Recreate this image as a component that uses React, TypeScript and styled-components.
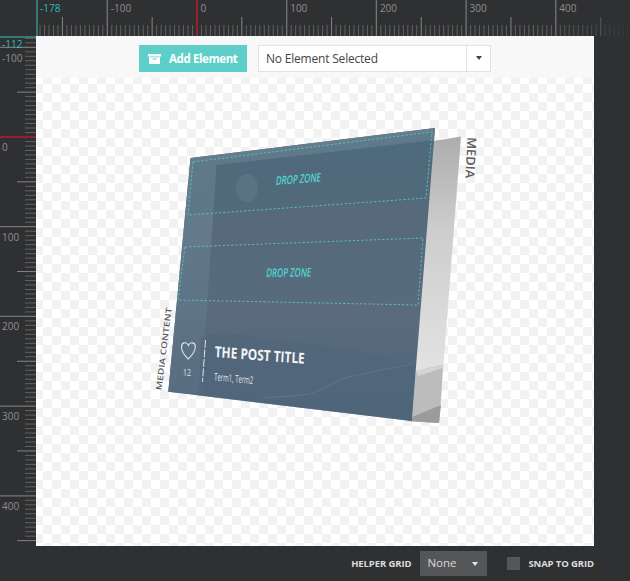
/**
 * App.tsx
 * Card layout editor: rulers, canvas with 3D card preview, footer options
 */
import React from 'react'
import styled, { createGlobalStyle } from 'styled-components'

const GlobalStyle = createGlobalStyle`
  html, body {
    margin: 0;
    padding: 0;
    background: #2f3032;
    font-family: 'Open Sans', 'Liberation Sans', sans-serif;
  }
`

const Editor = styled.div`
  width: 630px;
  height: 581px;
  overflow: hidden;
  display: grid;
  grid-template-columns: 36px 558px 36px;
  grid-template-rows: 36px 510px 35px;
  background: #2f3032;
`

const TopRulerSlot = styled.div`
  grid-column: 1 / 4;
  grid-row: 1;
`

const LeftRulerSlot = styled.div`
  grid-column: 1;
  grid-row: 2 / 4;
`

const RulerSvg = styled.svg`
  display: block;
`

const RulerLabel = styled.text<{ $active?: boolean }>`
  font-family: 'Open Sans', 'Liberation Sans', sans-serif;
  font-size: 10px;
  fill: ${(props) => (props.$active ? '#2fb9b5' : '#8f8f8f')};
`

const Canvas = styled.div`
  grid-column: 2;
  grid-row: 2;
  display: flex;
  flex-direction: column;
  background-color: #fff;
  background-image: repeating-conic-gradient(#f2f2f2 0 25%, #fff 0 50%);
  background-size: 18px 18px;
  background-position: 7px 12px;
`

const Toolbar = styled.div`
  height: 42px;
  flex: none;
  box-sizing: border-box;
  padding: 9px 0 0 103px;
  display: flex;
  align-items: flex-start;
  gap: 11px;
  background: #f8f8f8;
`

const AddButton = styled.button`
  width: 108px;
  height: 27px;
  border: 0;
  padding: 0 0 0 9px;
  display: flex;
  align-items: center;
  gap: 8px;
  background: #5ecfc8;
  color: #fff;
  font-family: inherit;
  font-size: 11.5px;
  font-weight: 700;
  letter-spacing: -0.4px;
`

const ElementSelect = styled.div`
  width: 233px;
  height: 27px;
  box-sizing: border-box;
  display: flex;
  background: #fff;
  border: 1px solid #e2e2e2;
  color: #444;
  font-size: 12px;
  letter-spacing: -0.2px;
  line-height: 25px;
`

const SelectValue = styled.div`
  flex: 1;
  padding-left: 7px;
`

const SelectArrow = styled.div`
  width: 24px;
  border-left: 1px solid #e2e2e2;
  display: flex;
  align-items: center;
  justify-content: center;
  padding-bottom: 2px;
  box-sizing: border-box;

  &::after {
    content: '';
    border-left: 3px solid transparent;
    border-right: 3px solid transparent;
    border-top: 4px solid #444;
  }
`

const StageSvg = styled.svg`
  display: block;
  flex: 1;
`

const PanelLabel = styled.text`
  font-family: 'Open Sans', 'Liberation Sans', sans-serif;
  font-weight: 600;
  fill: #5c5c5c;
`

const DropLabel = styled.text`
  font-family: 'Open Sans', 'Liberation Sans', sans-serif;
  font-size: 12px;
  font-weight: 600;
  fill: #4fd8d0;
`

const PostText = styled.text<{ $bold?: boolean }>`
  font-family: 'Open Sans', 'Liberation Sans', sans-serif;
  font-weight: ${(props) => (props.$bold ? 700 : 400)};
  fill: ${(props) => (props.$bold ? '#f2f4f5' : '#e0e5e9')};
`

const Footer = styled.div`
  grid-column: 2 / 4;
  grid-row: 3;
  box-sizing: border-box;
  padding-right: 36px;
  display: flex;
  align-items: center;
  justify-content: flex-end;
`

const FooterLabel = styled.span`
  font-size: 9.5px;
  font-weight: 700;
  letter-spacing: -0.1px;
  color: #dcdcdc;
  white-space: nowrap;
`

const GridSelect = styled.div`
  width: 67px;
  height: 25px;
  margin: 0 20px 0 9px;
  padding: 0 9px 3px 7px;
  box-sizing: border-box;
  display: flex;
  align-items: center;
  justify-content: space-between;
  background: #555658;
  color: #d8d8d8;
  font-size: 11.5px;

  &::after {
    content: '';
    margin-top: 4px;
    border-left: 3px solid transparent;
    border-right: 3px solid transparent;
    border-top: 4px solid #e6e6e6;
  }
`

const SnapBox = styled.div`
  width: 13px;
  height: 13px;
  margin-right: 8px;
  background: #555658;
`

const STEP = 0.897
const RED = '#96202d'
const CYAN = '#35c4bd'

type RulerProps = {
  vertical?: boolean
  length: number
  zero: number
  marker: number
  markerLabel: string
}

// one ruler; every tick is 5 units, the fade hides the ticks at the far end
function Ruler({ vertical, length, zero, marker, markerLabel }: RulerProps): JSX.Element {
  const id = vertical ? 'fadeV' : 'fadeH'
  const ticks: JSX.Element[] = []
  const first = Math.ceil((marker - zero) / (STEP * 5))
  const last = Math.floor((length - zero) / (STEP * 5))

  for (let i = first; i <= last; i++) {
    const at = zero + i * 5 * STEP
    const units = i * 5
    const major = units % 100 === 0
    const mid = units % 50 === 0
    const start = major ? 0 : mid ? 17 : 25
    const color = units === 0 ? RED : major ? '#767676' : mid ? '#858585' : '#626262'
    const width = units === 0 ? 2 : major ? 1.3 : 1
    ticks.push(
      vertical ? (
        <line key={i} x1={start} x2={36} y1={at} y2={at} stroke={color} strokeWidth={width} />
      ) : (
        <line key={i} y1={start} y2={36} x1={at} x2={at} stroke={color} strokeWidth={width} />
      )
    )
  }

  const labels = [-100, 0, 100, 200, 300, 400]

  return (
    <RulerSvg
      width={vertical ? 36 : length}
      height={vertical ? length : 36}
      viewBox={vertical ? `0 36 36 ${length}` : `0 0 ${length} 36`}
    >
      <defs>
        <linearGradient id={id} x1="0" y1="0" x2={vertical ? 0 : 1} y2={vertical ? 1 : 0}>
          <stop offset="0.88" stopColor="#fff" />
          <stop offset="1" stopColor="#fff" stopOpacity="0.1" />
        </linearGradient>
        <mask id={`${id}Mask`} maskUnits="userSpaceOnUse" x="0" y="0" width="630" height="630">
          <rect width="630" height="630" fill={`url(#${id})`} />
        </mask>
      </defs>
      <g mask={`url(#${id}Mask)`}>{ticks}</g>
      {vertical ? (
        <line x1={0} x2={36} y1={marker} y2={marker} stroke={CYAN} />
      ) : (
        <line y1={0} y2={36} x1={marker} x2={marker} stroke={CYAN} />
      )}
      {labels.map((n) =>
        vertical ? (
          <RulerLabel key={n} x={2} y={zero + n * STEP + (n < 0 ? 14.5 : 14)}>
            {n}
          </RulerLabel>
        ) : (
          <RulerLabel key={n} x={zero + n * STEP + 3.5} y={12}>
            {n}
          </RulerLabel>
        )
      )}
      <RulerLabel $active x={vertical ? 2 : marker + 3} y={vertical ? marker + 11 : 12}>
        {markerLabel}
      </RulerLabel>
    </RulerSvg>
  )
}

function ArchiveIcon(): JSX.Element {
  return (
    <svg width="13" height="10" viewBox="0 0 13 10">
      <path fill="#fff" d="M0 0h13v2.5H0zM1 3.3h11V10H1zM4.4 4.6v1h4.2v-1z" fillRule="evenodd" />
    </svg>
  )
}

function CardPreview(): JSX.Element {
  return (
    <StageSvg width="558" height="468" viewBox="36 78 558 468">
      <defs>
        <linearGradient id="backFill" x1="0" y1="137" x2="0" y2="370" gradientUnits="userSpaceOnUse">
          <stop offset="0" stopColor="#adadad" />
          <stop offset="0.4" stopColor="#cdcdcd" />
          <stop offset="1" stopColor="#e2e2e2" />
        </linearGradient>
        <linearGradient id="frontFill" x1="0" y1="130" x2="0" y2="420" gradientUnits="userSpaceOnUse">
          <stop offset="0" stopColor="#4e6a7c" />
          <stop offset="0.3" stopColor="#566a7b" />
          <stop offset="0.62" stopColor="#5b6b7d" />
          <stop offset="1" stopColor="#4d657b" />
        </linearGradient>
        <linearGradient id="bandFill" x1="0" y1="130" x2="0" y2="400" gradientUnits="userSpaceOnUse">
          <stop offset="0" stopColor="#657d8d" />
          <stop offset="0.5" stopColor="#64798a" />
          <stop offset="1" stopColor="#566c80" />
        </linearGradient>
      </defs>

      {/* back panel, media layer */}
      <polygon points="428,142 461,136.5 439,423 408,421" fill="url(#backFill)" />
      <polygon points="416,371 443,364.5 441.5,392 439,423 408,421" fill="#bcbcbc" />
      <polygon points="416,371 430,368 443,364.5 442.8,368 418,376" fill="#d4d4d4" />
      <polygon points="412,417 441,405 439,423 408,421" fill="#9b9b9b" />

      {/* front panel, content layer */}
      <polygon points="190.5,158 435,128 411.7,421 168.3,391.7" fill="url(#frontFill)" />

      {/* lighter frame on top and left */}
      <polygon points="190.5,158 435,128 434,140 216.5,165 201,395 168.3,391.7" fill="url(#bandFill)" />
      <path
        d="M201 337 C225 328 250 338 300 343 C350 348 385 355 415 366 L411.7 421 L199 395.6 Z"
        fill="#50667a"
        opacity="0.6"
      />
      <path
        d="M262 398 C290 396 310 396 325 388 C338 378 350 376 413 364"
        fill="none"
        stroke="#6a8193"
        strokeWidth="1.2"
        opacity="0.5"
      />
      <ellipse cx="247" cy="188" rx="11" ry="14" fill="#64798a" opacity="0.7" />

      {/* drop zones */}
      <polygon
        points="193,162 432,132 426,198 188,215"
        fill="#4a6e80"
        fillOpacity="0.18"
        stroke="#5cc4c2"
        strokeWidth="0.9"
        strokeDasharray="2.2 2"
      />
      <polygon
        points="185,247 423,238 418,305 178,300"
        fill="#4a6e80"
        fillOpacity="0.18"
        stroke="#5cc4c2"
        strokeWidth="0.9"
        strokeDasharray="2.2 2"
      />
      <DropLabel x="0" y="0" textLength="45" lengthAdjust="spacingAndGlyphs" transform="matrix(1 -0.08 -0.12 1 275.5 185)">
        DROP ZONE
      </DropLabel>
      <DropLabel x="0" y="0" textLength="45" lengthAdjust="spacingAndGlyphs" transform="matrix(1 -0.01 -0.1 1 266 277)">
        DROP ZONE
      </DropLabel>

      {/* post meta */}
      <path
        d="M188.2 359 C183 354 181.5 350.5 181.5 347 C181.5 342.5 186.5 341 188.5 345.5 C190.5 341 195.5 342.5 195.3 347 C195.2 350.5 193.5 354 188.2 359 Z"
        fill="none"
        stroke="#dfe4e8"
        strokeWidth="1.1"
      />
      <PostText x="0" y="0" fontSize="9.5" textLength="8" lengthAdjust="spacingAndGlyphs" transform="translate(183 376)">
        12
      </PostText>
      <line x1="205.5" y1="340" x2="202.5" y2="382" stroke="#e0e4e8" strokeWidth="1" strokeDasharray="8 1.5" />
      <PostText $bold x="0" y="0" fontSize="15" textLength="90" lengthAdjust="spacingAndGlyphs" transform="matrix(1 0.075 -0.05 1 214.5 357)">
        THE POST TITLE
      </PostText>
      <PostText x="0" y="0" fontSize="10.5" textLength="39" lengthAdjust="spacingAndGlyphs" transform="matrix(1 0.09 -0.06 1 214 380.5)">
        Term1, Term2
      </PostText>

      {/* layer names */}
      <PanelLabel x="0" y="0" fontSize="12.5" textLength="41" lengthAdjust="spacingAndGlyphs" transform="translate(467.5 137) rotate(93)">
        MEDIA
      </PanelLabel>
      <PanelLabel x="0" y="0" fontSize="8" textLength="83" lengthAdjust="spacingAndGlyphs" transform="translate(161.5 390.5) rotate(-83)">
        MEDIA CONTENT
      </PanelLabel>
    </StageSvg>
  )
}

export default function App(): JSX.Element {
  return (
    <>
      <GlobalStyle />
      <Editor>
        <TopRulerSlot>
          <Ruler length={630} zero={197} marker={37} markerLabel="-178" />
        </TopRulerSlot>
        <LeftRulerSlot>
          <Ruler vertical length={545} zero={137} marker={37} markerLabel="-112" />
        </LeftRulerSlot>
        <Canvas>
          <Toolbar>
            <AddButton>
              <ArchiveIcon />
              Add Element
            </AddButton>
            <ElementSelect>
              <SelectValue>No Element Selected</SelectValue>
              <SelectArrow />
            </ElementSelect>
          </Toolbar>
          <CardPreview />
        </Canvas>
        <Footer>
          <FooterLabel>HELPER GRID</FooterLabel>
          <GridSelect>None</GridSelect>
          <SnapBox />
          <FooterLabel>SNAP TO GRID</FooterLabel>
        </Footer>
      </Editor>
    </>
  )
}
